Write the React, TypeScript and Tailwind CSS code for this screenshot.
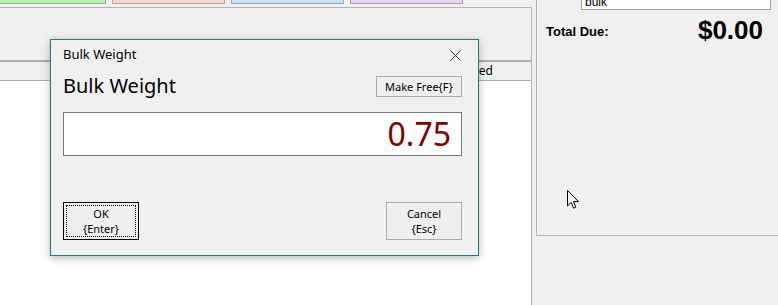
import React from "react";

const tabs = [
  { w: "w-[107px]", bg: "bg-[#b5f7a5]" },
  { w: "w-[113px]", bg: "bg-[#ffd5d5]" },
  { w: "w-[113px]", bg: "bg-[#c6e1f8]" },
  { w: "w-[113px]", bg: "bg-[#e4d3f8]" },
];

const Cursor = () => (
  <svg width="13" height="20" viewBox="0 0 13 20" className="absolute left-[567px] top-[190px]">
    <path
      d="M0.5 0.5 L0.5 16 L4.2 12.4 L6.6 18.2 L8.8 17.2 L6.4 11.6 L11.5 11.6 Z"
      fill="#fff"
      stroke="#000"
      strokeWidth="1"
      strokeLinejoin="miter"
    />
  </svg>
);

const BulkWeightDialog = () => (
  <div className="absolute left-[50px] top-[39px] w-[429px] h-[217px] border border-[#17806f] bg-[#f0f0f0] shadow-[0_2px_8px_rgba(0,0,0,0.28)] flex flex-col font-['Noto_Sans',sans-serif] text-black">
    <div className="h-[30px] flex items-center justify-between pl-[12px] pr-[17px]">
      <span className="text-[13px]">Bulk Weight</span>
      <svg width="11" height="11" viewBox="0 0 11 11">
        <path d="M0.5 0.5 L10.5 10.5 M10.5 0.5 L0.5 10.5" stroke="#333" strokeWidth="1" />
      </svg>
    </div>
    <div className="px-[12px] pr-[16px] flex flex-col">
      <div className="h-[32px] flex items-center justify-between">
        <span className="text-[20px] leading-none">Bulk Weight</span>
        <button className="h-[21px] w-[86px] border border-[#adadad] bg-[#efefef] text-[11px] leading-none">
          Make Free{"{F}"}
        </button>
      </div>
      <div className="mt-[10px] h-[44px] border border-[#7a7a7a] bg-white flex items-center justify-end pr-[10px]">
        <span className="text-[32px] leading-none text-[#800000]">0.75</span>
      </div>
      <div className="mt-[46px] flex justify-between">
        <button className="relative h-[38px] w-[76px] border border-black bg-[#efefef] text-[11px] leading-[15px]">
          <span className="absolute inset-[2px] border border-dotted border-black" />
          OK
          <br />
          {"{Enter}"}
        </button>
        <button className="h-[38px] w-[76px] border border-[#adadad] bg-[#efefef] text-[11px] leading-[15px]">
          Cancel
          <br />
          {"{Esc}"}
        </button>
      </div>
    </div>
  </div>
);

export default function App() {
  return (
    <div className="relative w-[778px] h-[305px] overflow-hidden bg-[#f0f0f0] flex font-['Liberation_Sans',sans-serif]">
      {/* left: order area */}
      <div className="w-[532px] flex flex-col">
        <div className="h-[4px] flex gap-[6px] -ml-[1px]">
          {tabs.map((t, i) => (
            <div key={i} className={`${t.w} ${t.bg} h-[4px] border-x border-b border-[#a6a6a6]`} />
          ))}
        </div>
        <div className="mt-[3px] flex-1 flex flex-col border-t border-r border-[#b4b4b4]">
          <div className="h-[52px]" />
          <div className="h-[21px] border-t-2 border-b border-[#acacac] flex items-center justify-end pr-[38px] text-[12px] font-['Noto_Sans',sans-serif]">
            Weighed
          </div>
          <div className="flex-1 bg-white" />
        </div>
      </div>

      {/* right: totals */}
      <div className="flex-1 pl-[4px]">
        <div className="h-[236px] border-l border-b border-[#b4b4b4] flex flex-col">
          <div className="-mt-[12px] ml-[44px] mr-[7px] h-[22px] bg-white border border-[#a0a0a0] px-[3px] text-[12px] leading-[14px] flex items-end">
            bulk
          </div>
          <div className="mt-[5px] flex items-center justify-between pl-[9px] pr-[15px] h-[30px]">
            <span className="text-[13px] font-bold mt-[4px]">Total Due:</span>
            <span className="text-[26px] font-bold leading-none">$0.00</span>
          </div>
        </div>
      </div>

      <BulkWeightDialog />
      <Cursor />
    </div>
  );
}
